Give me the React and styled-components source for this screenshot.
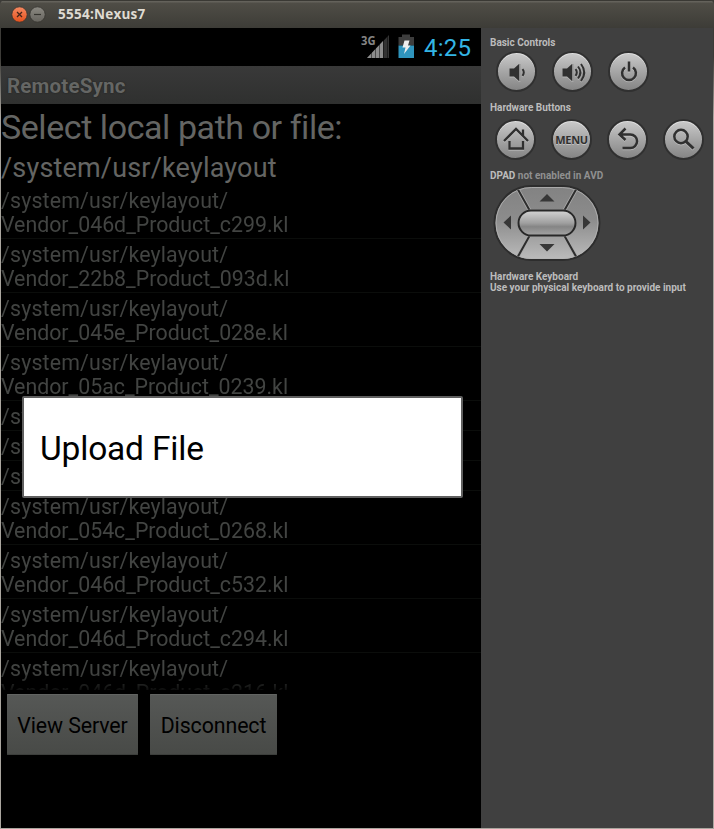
import React from "react";
import styled, { createGlobalStyle } from "styled-components";

const GlobalStyle = createGlobalStyle`
  * { box-sizing: border-box; }
  body { margin: 0; background: #3c3b37; font-family: Roboto, "Noto Sans", sans-serif; }
`;

const Window = styled.div`
  position: relative;
  width: 714px;
  height: 829px;
  display: flex;
  flex-direction: column;
  overflow: hidden;
  background: #3c3b37;
`;

const TitleBar = styled.header`
  height: 28px;
  flex: none;
  display: flex;
  align-items: center;
  padding: 0 0 0 11px;
  background: linear-gradient(#3a3934 0, #3a3934 1px, #64625b 1px, #64625b 2px, #4f4d46 3px, #3d3c37 100%);
  border-radius: 5px 5px 0 0;
  color: #dfdbd2;
`;

const WindowButtons = styled.svg`
  width: 36px;
  height: 18px;
  display: block;
`;

const WindowTitle = styled.h1`
  margin: 0 0 0 11px;
  font: bold 13.5px/18px "Open Sans", "Noto Sans", sans-serif;
  letter-spacing: 0.25px;
  white-space: nowrap;
`;

const Body = styled.main`
  height: 801px;
  display: flex;
  border: solid #aaa69f;
  border-width: 0 1px 1px;
  border-image: linear-gradient(#3c3b37 0, #3c3b37 30px, #aaa69f 90px) 1;
`;

const Screen = styled.section`
  position: relative;
  width: 480px;
  height: 800px;
  flex: none;
  overflow: hidden;
  background: #000;
`;

const StatusBar = styled.div`
  height: 38px;
  display: flex;
  align-items: center;
  justify-content: flex-end;
  padding-right: 10px;
`;

const StatusIcons = styled.svg`
  width: 56px;
  height: 38px;
  margin-right: 7px;
  font-family: "Open Sans", sans-serif;
`;

const Clock = styled.time`
  width: 47px;
  color: #33b5e5;
  font-size: 24px;
  line-height: 38px;
  letter-spacing: 0.2px;
  white-space: nowrap;
  padding-top: 2px;
`;

const ActionBar = styled.div`
  height: 38px;
  padding: 1px 0 0 6px;
  background: linear-gradient(#393939, #2f302f);
  color: #656664;
  font-size: 20.5px;
  font-weight: 700;
  line-height: 38px;
  letter-spacing: ${(p) => p.$spacing}px;
  text-shadow: 0 0 2px #1c1d1c;
`;

const Heading = styled.h2`
  height: ${(p) => p.$height}px;
  margin: 0;
  font-size: ${(p) => p.$size}px;
  line-height: ${(p) => p.$line}px;
  letter-spacing: ${(p) => p.$spacing}px;
  font-weight: 400;
  color: #646563;
  white-space: nowrap;
`;

const FileList = styled.ul`
  height: 505px;
  margin: 0;
  padding: 0;
  list-style: none;
  overflow: hidden;
  mask-image: linear-gradient(#000 488px, rgba(0, 0, 0, 0.2) 505px);
`;

const FileRow = styled.li`
  height: ${(p) => (p.$short ? 30 : 54)}px;
  padding-top: 4px;
  border-bottom: 1px solid #0b0d0b;
  color: #424442;
  font-size: 21.33px;
  line-height: 24px;
  white-space: nowrap;
`;

const PathLine = styled.div`
  letter-spacing: ${(p) => p.$spacing}px;
`;

const ButtonBar = styled.div`
  display: flex;
  gap: 12px;
  padding: 4px 6px;
`;

const AndroidButton = styled.button`
  width: ${(p) => p.$width}px;
  height: 61px;
  padding: 2px 0 0;
  border: 0;
  border-radius: 1px;
  background: linear-gradient(#565856, #484a47);
  box-shadow: inset 0 1px #626462, inset 0 -1px #3d3f3c;
  color: #000;
  font-family: inherit;
  font-size: 21.33px;
  letter-spacing: ${(p) => p.$spacing}px;
  white-space: nowrap;
`;

const Dialog = styled.div`
  position: absolute;
  left: 21px;
  top: 368px;
  width: 441px;
  height: 102px;
  padding: 2px 0 0 16px;
  border: 2px solid #606060;
  border-radius: 2px;
  background: #fff;
  color: #000;
  font-size: 33.5px;
  line-height: 98px;
  letter-spacing: ${(p) => p.$spacing}px;
`;

const Controls = styled.aside`
  flex: 1;
  background: #404040;
  color: #bcbcbc;
  padding-left: 9px;
  display: flex;
  flex-direction: column;
`;

const Label = styled.div`
  height: ${(p) => p.$height}px;
  padding-top: ${(p) => p.$top}px;
  font-size: 10px;
  font-weight: 700;
  line-height: 11px;
  white-space: nowrap;
`;

const Muted = styled.span`
  color: #909090;
`;

const KeyRow = styled.div`
  display: flex;
  gap: 15px;
  height: 41px;
  margin-left: ${(p) => p.$left}px;
`;

const Key = styled.button`
  width: 41px;
  height: 41px;
  padding: 0;
  border: 2px solid #303030;
  border-radius: 50%;
  background: linear-gradient(#cacaca, #a6a6a6 50%, #858585);
  box-shadow: inset 0 1px #dedede;
  color: #303030;
  display: flex;
  align-items: center;
  justify-content: center;
`;

const MenuText = styled.span`
  font: bold 11px/12px "Open Sans", "Noto Sans", sans-serif;
  letter-spacing: -0.3px;
  text-shadow: 0 1px #c0c0c0;
  padding-top: 1px;
`;

const Glyph = styled.svg`
  width: 36px;
  height: 36px;
  flex: none;
  fill: none;
  stroke: currentColor;
  filter: drop-shadow(0 1px 0 rgba(210, 210, 210, 0.5));
`;

const Pad = styled.svg`
  display: block;
  width: 108px;
  height: 78px;
  margin-left: 3px;
`;

const files = [
  "Vendor_046d_Product_c299.kl",
  "Vendor_22b8_Product_093d.kl",
  "Vendor_045e_Product_028e.kl",
  "Vendor_05ac_Product_0239.kl",
  "",
  "",
  "",
  "Vendor_054c_Product_0268.kl",
  "Vendor_046d_Product_c532.kl",
  "Vendor_046d_Product_c294.kl",
  "Vendor_046d_Product_c216.kl",
];

function TitleIcons() {
  return (
    <WindowButtons viewBox="0 0 36 18">
      <defs>
        <linearGradient id="close" x2="0" y2="1"><stop stopColor="#f58a62" /><stop offset="1" stopColor="#e4501c" /></linearGradient>
        <linearGradient id="min" x2="0" y2="1"><stop stopColor="#8b8982" /><stop offset="1" stopColor="#66645e" /></linearGradient>
      </defs>
      <circle cx="8.5" cy="9.5" r="7.7" fill="url(#close)" stroke="#35342f" strokeWidth=".8" />
      <path d="M6 7l5 5m0-5l-5 5" stroke="#45251a" strokeWidth="1.3" />
      <circle cx="26.5" cy="9.5" r="7.7" fill="url(#min)" stroke="#35342f" strokeWidth=".8" />
      <path d="M23 9.5h7" stroke="#35342f" strokeWidth="1.2" />
    </WindowButtons>
  );
}

function Signal() {
  return (
    <StatusIcons viewBox="0 0 56 38">
      <text x="0" y="17" fill="#858585" fontSize="13" fontWeight="700" textLength="14.5" lengthAdjust="spacingAndGlyphs">3G</text>
      <path d="M6 30L28 7v23z" fill="#333" />
      <path d="M6 30L22 13v17z" fill="#8d8d8d" />
      <path d="M10.5 24v6M14.5 20v10M18.5 16v14M22.5 12v18M26.5 8v22" stroke="#000" strokeOpacity=".45" />
      <path d="M37.5 9H41V6.5h8V9h4v8.5H37.5z" fill="#3d3d3d" />
      <path d="M37.5 17.5H53V30H37.5z" fill="#2f94bd" />
      <path d="M43.5 12.5h5l-1.500 5h2.500L43 26l1.500-6.500h-3z" fill="#eee" />
    </StatusIcons>
  );
}

function Speaker({ loud }) {
  return (
    <Glyph viewBox="0 0 36 36">
      <g transform={loud ? "translate(-3 0)" : undefined}>
        <path d="M10.5 14.500H15l5-4.500v17l-5-4.500h-4.500z" fill="#303030" stroke="none" />
        <path d="M20.8 10v17" stroke="#7c7c7c" />
        <path d="M23.5 15.200q2.600 3.300 0 6.600" strokeWidth="2" />
        {loud && <path d="M26 12.500q4.800 6 0 12M29 10q6.500 8.500 0 17" strokeWidth="2" />}
      </g>
    </Glyph>
  );
}

function DPad() {
  return (
    <Pad viewBox="0 0 108 78">
      <defs>
        <linearGradient id="pad" x2="0" y2="1"><stop stopColor="#828282" /><stop offset=".45" stopColor="#8c8c8c" /><stop offset="1" stopColor="#bcbcbc" /></linearGradient>
        <linearGradient id="pill" x2="0" y2="1"><stop stopColor="#d4d4d4" /><stop offset=".5" stopColor="#a0a0a0" /><stop offset=".65" stopColor="#858585" /><stop offset="1" stopColor="#a4a4a4" /></linearGradient>
        <clipPath id="padClip"><rect x="2.5" y="3" width="103" height="72" rx="36" /></clipPath>
      </defs>
      <rect x="1.5" y="2" width="105" height="74" rx="37" fill="url(#pad)" stroke="#2d2d2d" strokeWidth="2" />
      <rect x="3" y="3.5" width="102" height="71" rx="35.5" fill="none" stroke="#b4b4b4" strokeWidth=".8" />
      <g clipPath="url(#padClip)">
        <path d="M23 2L37 27M85 2L71 27M23 76L37 51M85 76L71 51" stroke="#a8a8a8" strokeWidth="3.6" />
        <path d="M23 2L37 27M85 2L71 27M23 76L37 51M85 76L71 51" stroke="#2d2d2d" strokeWidth="2" />
      </g>
      <rect x="24.5" y="25.5" width="59" height="27" rx="13.5" fill="#a4a4a4" />
      <rect x="25.5" y="26.5" width="57" height="25" rx="12.5" fill="url(#pill)" stroke="#282828" strokeWidth="2" />
      <path d="M46.5 17.500L54 10l7.500 7.500zM46.500 60h15L54 67.500zM18 31.500v14L10.500 38.500zM90 31.500v14l7.500-7z" fill="#373737" />
    </Pad>
  );
}

export default function App() {
  return (
    <>
      <GlobalStyle />
      <Window>
        <TitleBar>
          <TitleIcons />
          <WindowTitle>5554:Nexus7</WindowTitle>
        </TitleBar>
        <Body>
          <Screen>
            <StatusBar>
              <Signal />
              <Clock>4:25</Clock>
            </StatusBar>
            <ActionBar $spacing={0.2}>RemoteSync</ActionBar>
            <Heading $height={43} $size={34} $line={47} $spacing={-0.43}>Select local path or file:</Heading>
            <Heading $height={38} $size={27} $line={43} $spacing={0.18}>/system/usr/keylayout</Heading>
            <FileList>
              {files.map((file, i) => (
                <FileRow key={i} $short={!file}>
                  <PathLine $spacing={0.16}>/system/usr/keylayout/</PathLine>
                  {file && <PathLine $spacing={-0.01}>{file}</PathLine>}
                </FileRow>
              ))}
            </FileList>
            <ButtonBar>
              <AndroidButton $width={131} $spacing={-0.1}>View Server</AndroidButton>
              <AndroidButton $width={127} $spacing={-0.08}>Disconnect</AndroidButton>
            </ButtonBar>
            <Dialog $spacing={-0.18}>Upload File</Dialog>
          </Screen>
          <Controls>
            <Label $height={23} $top={9}>Basic Controls</Label>
            <KeyRow $left={6}>
              <Key aria-label="Volume down"><Speaker /></Key>
              <Key aria-label="Volume up"><Speaker loud /></Key>
              <Key aria-label="Power">
                <Glyph viewBox="0 0 36 36">
                  <path d="M14 13.500a6.900 6.900 0 1 0 8 0M18 7.500v10" strokeWidth="2.5" />
                </Glyph>
              </Key>
            </KeyRow>
            <Label $height={27} $top={10}>Hardware Buttons</Label>
            <KeyRow $left={5}>
              <Key aria-label="Home">
                <Glyph viewBox="0 0 36 36">
                  <path d="M6 19L18 7l12 12M25 13.500V7.500M11.500 19v7.500h13.500V19" strokeWidth="2.3" />
                </Glyph>
              </Key>
              <Key><MenuText>MENU</MenuText></Key>
              <Key aria-label="Back">
                <Glyph viewBox="0 0 36 36">
                  <path d="M15.500 6.500L9.500 12.500l6 5.500M10 12.500H20.300a6.700 6.700 0 0 1 0 13.500H12.500" strokeWidth="2.5" />
                </Glyph>
              </Key>
              <Key aria-label="Search">
                <Glyph viewBox="0 0 36 36">
                  <circle cx="15" cy="14.5" r="6.7" strokeWidth="2.5" />
                  <path d="M20 19.500l7.500 7" strokeWidth="3" />
                </Glyph>
              </Key>
            </KeyRow>
            <Label $height={24} $top={10}>DPAD <Muted>not enabled in AVD</Muted></Label>
            <DPad />
            <Label $height={20} $top={9}>Hardware Keyboard</Label>
            <Label $height={11} $top={0}>Use your physical keyboard to provide input</Label>
          </Controls>
        </Body>
      </Window>
    </>
  );
}
